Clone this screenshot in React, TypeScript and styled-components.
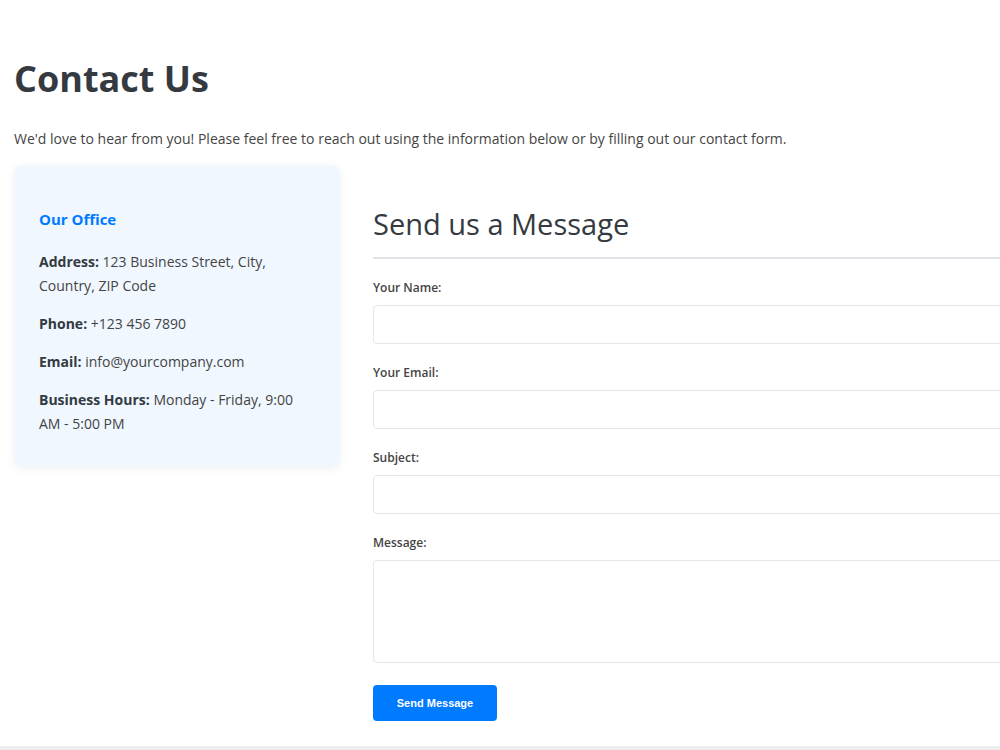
import styled, { createGlobalStyle } from 'styled-components';

const GlobalStyle = createGlobalStyle`
  html, body {
    margin: 0;
    padding: 0;
    background: #eeeeee;
    overflow: hidden;
  }
  body {
    font-family: 'Open Sans', 'Noto Sans', sans-serif;
    color: #333a40;
  }
`;

const fields = [
  { label: 'Your Name:', id: 'name' },
  { label: 'Your Email:', id: 'email' },
  { label: 'Subject:', id: 'subject' },
];

const officeInfo = [
  { label: 'Address:', value: '123 Business Street, City, Country, ZIP Code' },
  { label: 'Phone:', value: '+123 456 7890' },
  { label: 'Email:', value: 'info@yourcompany.com' },
  { label: 'Business Hours:', value: 'Monday - Friday, 9:00 AM - 5:00 PM' },
];

export default function App() {
  return (
    <>
      <GlobalStyle />
      <Page>
        <Title>Contact Us</Title>
        <Intro>
          We'd love to hear from you! Please feel free to reach out using the information below or
          by filling out our contact form.
        </Intro>
        <Columns>
          <InfoCard>
            <CardTitle>Our Office</CardTitle>
            {officeInfo.map((item) => (
              <InfoLine key={item.label}>
                <InfoLabel>{item.label}</InfoLabel> {item.value}
              </InfoLine>
            ))}
          </InfoCard>
          <ContactForm onSubmit={(e) => e.preventDefault()}>
            <FormTitle>Send us a Message</FormTitle>
            {fields.map((f) => (
              <Field key={f.id}>
                <Label htmlFor={f.id}>{f.label}</Label>
                <TextInput id={f.id} type="text" />
              </Field>
            ))}
            <Field>
              <Label htmlFor="message">Message:</Label>
              <MessageBox id="message" />
            </Field>
            <SubmitButton type="submit">Send Message</SubmitButton>
          </ContactForm>
        </Columns>
      </Page>
    </>
  );
}

const Page = styled.div`
  background: #fff;
  height: 746px;
  padding: 0 14px;
  box-sizing: border-box;
  overflow: hidden;
`;

const Title = styled.h1`
  margin: 0;
  padding-top: 54px;
  font-size: 36px;
  line-height: 50px;
  font-weight: 700;
  color: #343a40;
`;

const Intro = styled.p`
  margin: 24px 0 0;
  font-size: 14px;
  line-height: 22px;
  color: #444;
  white-space: nowrap;
`;

const Columns = styled.div`
  display: flex;
  gap: 33px;
  margin-top: 15px;
  align-items: flex-start;
`;

const InfoCard = styled.div`
  width: 326px;
  flex-shrink: 0;
  box-sizing: border-box;
  padding: 42px 25px 17px;
  background: #f0f7ff;
  border-radius: 8px;
  box-shadow: 0 2px 10px rgba(0, 0, 0, 0.06);
`;

const CardTitle = styled.h3`
  margin: 0 0 19px;
  font-size: 15px;
  line-height: 24px;
  font-weight: 700;
  color: #007bff;
`;

const InfoLine = styled.p`
  margin: 0 0 14px;
  font-size: 14px;
  line-height: 24px;
  color: #444;
`;

const InfoLabel = styled.strong`
  color: #333a40;
`;

const ContactForm = styled.form`
  width: 652px;
  flex-shrink: 0;
  padding-top: 39px;
`;

const FormTitle = styled.h2`
  margin: 0 0 20px;
  padding-bottom: 13px;
  font-size: 29px;
  line-height: 40px;
  font-weight: 400;
  color: #343a40;
  border-bottom: 2px solid #dfe3e8;
`;

const Field = styled.div`
  display: flex;
  flex-direction: column;
  gap: 9px;
  margin-bottom: 20px;
`;

const Label = styled.label`
  font-size: 12px;
  line-height: 17px;
  font-weight: 600;
  color: #444;
`;

const TextInput = styled.input`
  height: 39px;
  box-sizing: border-box;
  border: 1px solid #e6e6e6;
  border-radius: 4px;
  padding: 0 10px;
  font: inherit;
`;

const MessageBox = styled.textarea`
  height: 103px;
  box-sizing: border-box;
  border: 1px solid #e6e6e6;
  border-radius: 4px;
  padding: 10px;
  resize: none;
  font: inherit;
`;

const SubmitButton = styled.button`
  margin-top: 2px;
  width: 124px;
  height: 36px;
  border: none;
  border-radius: 4px;
  background: #007bff;
  color: #fff;
  font-family: 'Liberation Sans', Arial, sans-serif;
  font-size: 11px;
  font-weight: 700;
  cursor: pointer;
`;
